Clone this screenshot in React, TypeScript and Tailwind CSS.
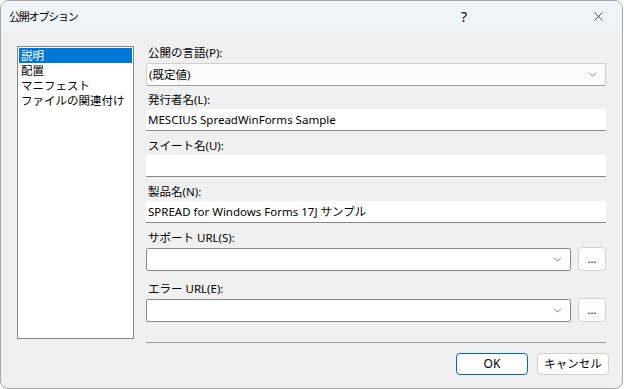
import { ChevronDown, X } from 'lucide-react';

const font = { fontFamily: '"Noto Sans", "Noto Sans CJK JP", sans-serif' };
const cjk = { fontFamily: '"Noto Sans CJK JP", "Noto Sans", sans-serif' };

const items = ['説明', '配置', 'マニフェスト', 'ファイルの関連付け'];

function Label({ text, className }: { text: string; className?: string }) {
  return <div className={`h-[18px] leading-[18px] pl-[2px] text-[11.5px] text-black ${className ?? ''}`}>{text}</div>;
}

function TextBox({ value }: { value?: string }) {
  return (
    <div className="h-[22px] bg-white border-b border-[#8a8a8a] pl-[2px] text-[11.5px] leading-[21px] text-black">
      {value}
    </div>
  );
}

function Combo({ value, flat }: { value?: string; flat?: boolean }) {
  return (
    <div
      className={`flex-1 h-[23px] flex items-center justify-between pl-[2px] pr-[6px] text-[11.5px] ${
        flat ? 'bg-[#fbfbfb] border border-[#d0d0d0] border-b-[#a0a0a0] rounded-[2px]' : 'bg-white border border-[#8a8a8a] rounded-[2px]'
      }`}
    >
      <span>{value}</span>
      <ChevronDown size={13} strokeWidth={1.3} className="text-[#444]" />
    </div>
  );
}

function DotButton() {
  return (
    <button className="w-[28px] h-[24px] ml-[7px] bg-[#fdfdfd] border border-[#d0d0d0] rounded-[4px] text-[11px] leading-[14px] text-black">
      ...
    </button>
  );
}

export default function App() {
  return (
    <div className="w-[624px] h-[389px] bg-white" style={font}>
      <div className="w-[623px] h-[389px] flex flex-col bg-[#f0f0f0] border border-[#a8a8a8] rounded-[8px] overflow-hidden">
        <div className="h-[30px] flex items-center bg-[#eff4f9] pl-[8px] shrink-0">
          <span className="text-[11px] tracking-[-1.2px] text-black flex-1" style={cjk}>公開オプション</span>
          <span className="text-[14px] text-black mr-[124px]">?</span>
          <X size={15} strokeWidth={1.1} className="mr-[16px] text-black" />
        </div>
        <div className="flex flex-1">
          <div className="ml-[16px] mt-[15px] w-[117px] h-[293px] bg-white border border-[#828790] p-px" style={cjk}>
            {items.map((t, i) => (
              <div
                key={t}
                className={`h-[15px] leading-[15px] text-[11.5px] pl-[2px] ${i === 0 ? 'bg-[#0078d7] text-white' : 'text-black'}`}
              >
                {t}
              </div>
            ))}
          </div>
          <div className="ml-[12px] w-[460px] flex flex-col pt-[13px]">
            <Label text="公開の言語(P):" />
            <div className="flex mt-px">
              <Combo value="(既定値)" flat />
            </div>
            <Label text="発行者名(L):" className="mt-[5px]" />
            <TextBox value="MESCIUS SpreadWinForms Sample" />
            <Label text="スイート名(U):" className="mt-[6px]" />
            <TextBox />
            <Label text="製品名(N):" className="mt-[6px]" />
            <TextBox value="SPREAD for Windows Forms 17J サンプル" />
            <Label text="サポート URL(S):" className="mt-[6px]" />
            <div className="flex items-center">
              <Combo />
              <DotButton />
            </div>
            <Label text="エラー URL(E):" className="mt-[9px]" />
            <div className="flex items-center">
              <Combo />
              <DotButton />
            </div>
            <div className="mt-[20px] h-px bg-[#a0a0a0]" />
            <div className="flex justify-end mt-[10px] -mr-[3px] gap-[9px]">
              <button className="w-[72px] h-[22px] bg-[#fdfdfd] border border-[#0067c0] rounded-[4px] text-[12px] leading-[18px] text-black">
                OK
              </button>
              <button className="w-[72px] h-[22px] bg-[#fdfdfd] border border-[#d0d0d0] rounded-[4px] text-[11.5px] leading-[18px] text-black">
                キャンセル
              </button>
            </div>
          </div>
        </div>
      </div>
    </div>
  );
}
